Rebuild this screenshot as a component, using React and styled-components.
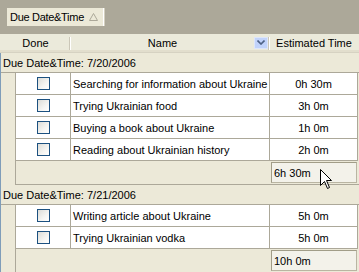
import React from "react";
import styled, { createGlobalStyle } from "styled-components";

const Global = createGlobalStyle`
  html, body { margin: 0; padding: 0; }
  body {
    background: #ECE9D8;
    font-family: "Liberation Sans", Arial, sans-serif;
    font-size: 11px;
    color: #000;
  }
`;

const Frame = styled.div`
  position: relative;
  width: 359px;
  height: 272px;
  overflow: hidden;
  background: #ECE9D8;
`;

const GroupPanel = styled.div`
  height: 34px;
  background: #ACA899;
  box-sizing: border-box;
  padding: 8px 0 0 7px;
`;

const GroupChip = styled.div`
  display: flex;
  align-items: center;
  justify-content: space-between;
  white-space: nowrap;
  letter-spacing: -0.3px;
  height: 18px;
  width: 97px;
  box-sizing: border-box;
  padding: 0 5px 0 3px;
  background: #ECE9D8;
  border-right: 1px solid #FFFFFF;
  box-shadow: 1px 0 0 #D4D0C0;
`;

const Header = styled.div`
  display: flex;
  height: 19px;
  box-sizing: border-box;
  background: #EBEADB;
  border-bottom: 1px solid #D6D2C2;
  box-shadow: inset 0 -2px 0 #E2DECD;
`;

const HeadCell = styled.div`
  position: relative;
  display: flex;
  align-items: center;
  justify-content: center;
  width: ${(p) => p.$w}px;
  box-sizing: border-box;
  padding-bottom: 1px;
  white-space: nowrap;
  ${(p) =>
    p.$sep &&
    `&::after {
      content: "";
      position: absolute;
      right: 0;
      top: 3px;
      height: 13px;
      width: 1px;
      background: #FFFFFF;
      box-shadow: -1px 0 0 #CBC7B8;
    }`}
`;

const HeadLabel = styled.span`
  flex: 1;
  text-align: center;
`;

const DropButton = styled.div`
  width: 14px;
  height: 12px;
  margin-right: 2px;
  background: #C1D3FB;
  border: 1px solid #DDE6FA;
  box-sizing: border-box;
  display: flex;
  align-items: center;
  justify-content: center;
`;

const Body = styled.div`
  border-left: 1px solid #7F9DB9;
`;

const GroupRow = styled.div`
  height: 19px;
  box-sizing: border-box;
  padding-left: 2px;
  display: flex;
  align-items: center;
  white-space: nowrap;
`;

const Rows = styled.div`
  padding-left: 14px;
  border-top: 1px solid #ACA899;
`;

const Row = styled.div`
  display: flex;
  height: 22px;
  box-sizing: border-box;
  border-bottom: 1px solid #ACA899;
  margin-right: 1px;
`;

const Cell = styled.div`
  width: ${(p) => p.$w}px;
  box-sizing: border-box;
  background: #FFFFFF;
  border-left: 1px solid #ACA899;
  ${(p) => p.$last && "border-right: 1px solid #ACA899;"}
  display: flex;
  align-items: center;
  justify-content: ${(p) => p.$align || "flex-start"};
  padding-left: ${(p) => (p.$align ? 0 : 2)}px;
  white-space: nowrap;
  overflow: hidden;
`;

const Check = styled.span`
  width: 13px;
  height: 13px;
  box-sizing: border-box;
  border: 1px solid #1C5180;
  background: linear-gradient(135deg, #DCDCD7 0%, #F5F5F2 60%, #FFFFFF 100%);
  margin-left: 1px;
`;

const Footer = styled.div`
  display: flex;
  height: 24px;
  box-sizing: border-box;
  margin-left: 14px;
  border-left: 1px solid #ACA899;
  border-bottom: 1px solid #ACA899;
  padding: 1px 1px 1px 0;
  justify-content: flex-end;
`;

const Summary = styled.div`
  width: 86px;
  height: 21px;
  box-sizing: border-box;
  margin-right: 1px;
  background: #F3F2EA;
  border: 1px solid #B9B5A2;
  border-top-color: #A19D88;
  border-left-color: #A19D88;
  display: flex;
  align-items: center;
  padding-left: 2px;
  white-space: nowrap;
`;

const Cursor = styled.svg`
  position: absolute;
  left: 320px;
  top: 169px;
`;

const groups = [
  {
    date: "7/20/2006",
    total: "6h 30m",
    items: [
      ["Searching for information about Ukraine", "0h 30m"],
      ["Trying Ukrainian food", "3h 0m"],
      ["Buying a book about Ukraine", "1h 0m"],
      ["Reading about Ukrainian history", "2h 0m"],
    ],
  },
  {
    date: "7/21/2006",
    total: "10h 0m",
    items: [
      ["Writing article about Ukraine", "5h 0m"],
      ["Trying Ukrainian vodka", "5h 0m"],
    ],
  },
];

export default function App() {
  return (
    <Frame>
      <Global />
      <GroupPanel>
        <GroupChip>
          <span>Due Date&amp;Time</span>
          <svg width="9" height="8" viewBox="0 0 9 8">
            <path d="M4.5 0.5 L8.5 7.5 L0.5 7.5 Z" fill="none" stroke="#ACA899" strokeWidth="1" />
          </svg>
        </GroupChip>
      </GroupPanel>
      <Header>
        <HeadCell $w={71} $sep>
          <HeadLabel>Done</HeadLabel>
        </HeadCell>
        <HeadCell $w={199} $sep>
          <HeadLabel>Name</HeadLabel>
          <DropButton>
            <svg width="8" height="5" viewBox="0 0 8 5">
              <path d="M0.5 0.5 L4 4 L7.5 0.5" fill="none" stroke="#4D6185" strokeWidth="1.6" />
            </svg>
          </DropButton>
        </HeadCell>
        <HeadCell $w={88}>
          <HeadLabel>Estimated Time</HeadLabel>
        </HeadCell>
      </Header>
      <Body>
        {groups.map((g) => (
          <React.Fragment key={g.date}>
            <GroupRow>Due Date&amp;Time: {g.date}</GroupRow>
            <Rows>
              {g.items.map(([name, time]) => (
                <Row key={name}>
                  <Cell $w={55} $align="center">
                    <Check />
                  </Cell>
                  <Cell $w={199}>{name}</Cell>
                  <Cell $w={89} $align="center" $last>
                    {time}
                  </Cell>
                </Row>
              ))}
            </Rows>
            <Footer>
              <Summary>{g.total}</Summary>
            </Footer>
          </React.Fragment>
        ))}
      </Body>
      <Cursor width="13" height="21" viewBox="0 0 13 21">
        <path
          d="M0.5 0.5 L0.5 16.5 L4.5 12.5 L7.5 19.5 L9.5 18.5 L6.5 11.5 L11.5 11.5 Z"
          fill="#FFFFFF"
          stroke="#000000"
          strokeWidth="1"
          strokeLinejoin="miter"
        />
      </Cursor>
    </Frame>
  );
}
